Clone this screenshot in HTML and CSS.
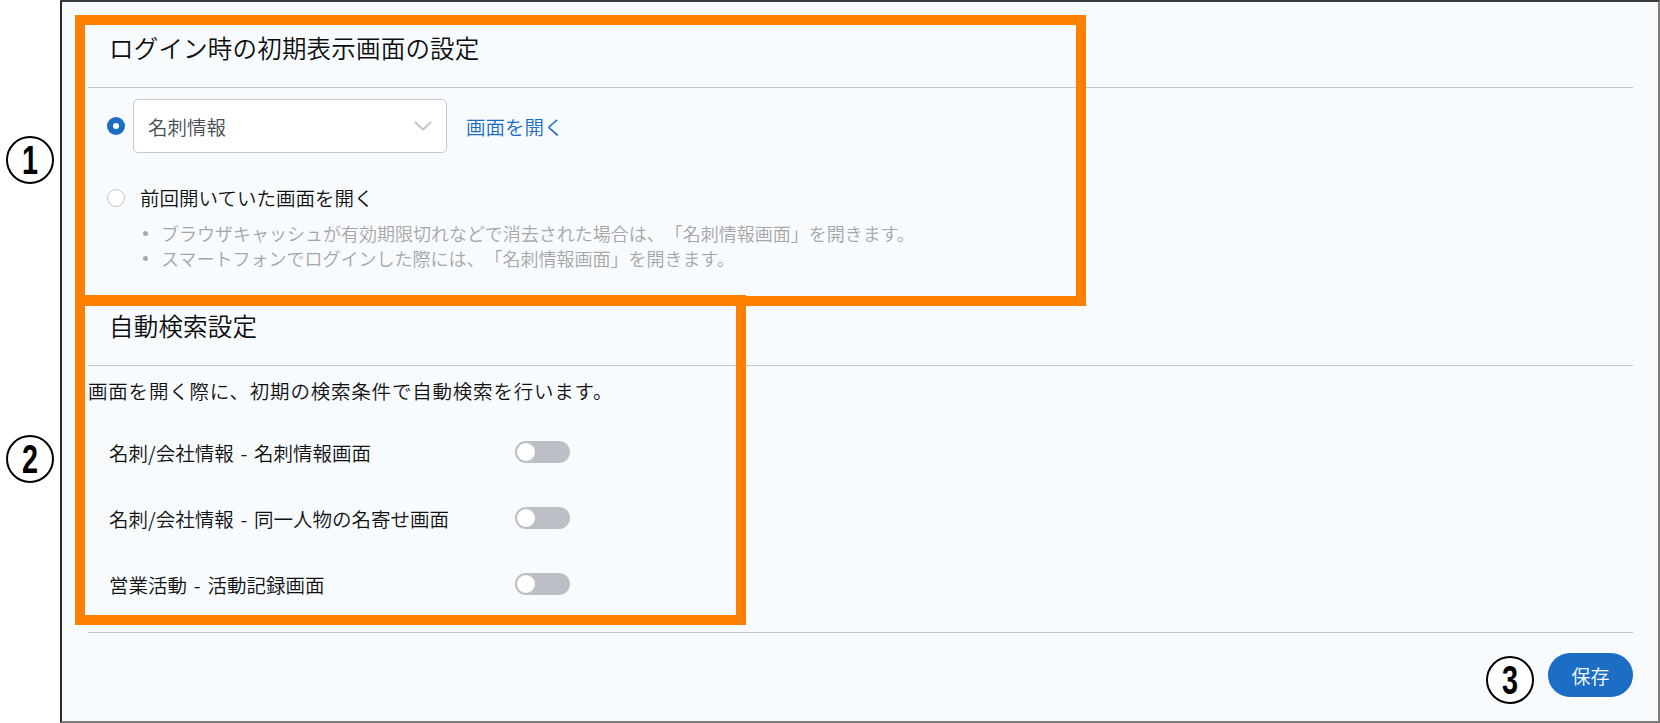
FILE: index.html
```html
<!DOCTYPE html>
<html lang="ja">
<head>
<meta charset="utf-8">
<title>設定</title>
<link rel="stylesheet" href="styles.css">
</head>
<body>
<div class="page">
  <aside class="gutter"></aside>
  <main class="panel">
    <section class="section">
      <h2 class="section-title">ログイン時の初期表示画面の設定</h2>
      <div class="section-body first-body">
        <div class="option-row">
          <span class="radio radio-checked"></span>
          <div class="select">
            <span class="select-value">名刺情報</span>
            <svg class="chevron" width="18" height="10" viewBox="0 0 18 10"><polyline points="1.5,1.5 9,8.5 16.5,1.5" fill="none" stroke="#c3c6cc" stroke-width="2.2" stroke-linecap="round" stroke-linejoin="round"/></svg>
          </div>
          <a class="link">画面を開く</a>
        </div>
        <div class="option-row second-option">
          <span class="radio"></span>
          <span class="option-label">前回開いていた画面を開く</span>
        </div>
        <ul class="notes">
          <li>ブラウザキャッシュが有効期限切れなどで消去された場合は、「名刺情報画面」を開きます。</li>
          <li>スマートフォンでログインした際には、「名刺情報画面」を開きます。</li>
        </ul>
      </div>
    </section>
    <section class="section">
      <h2 class="section-title">自動検索設定</h2>
      <div class="section-body">
        <p class="description">画面を開く際に、初期の検索条件で自動検索を行います。</p>
        <div class="toggle-list">
          <div class="toggle-row"><span class="toggle-label">名刺/会社情報 - 名刺情報画面</span><span class="toggle"><span class="knob"></span></span></div>
          <div class="toggle-row"><span class="toggle-label">名刺/会社情報 - 同一人物の名寄せ画面</span><span class="toggle"><span class="knob"></span></span></div>
          <div class="toggle-row"><span class="toggle-label">営業活動 - 活動記録画面</span><span class="toggle"><span class="knob"></span></span></div>
        </div>
      </div>
    </section>
    <footer class="footer">
      <button class="save">保存</button>
    </footer>
  </main>

  <div class="frame frame-1"></div>
  <div class="frame frame-2"></div>
  <div class="mark mark-1"><span>1</span></div>
  <div class="mark mark-2"><span>2</span></div>
  <div class="mark mark-3"><span>3</span></div>
</div>
</body>
</html>
```
FILE: styles.css
```css
* { box-sizing: border-box; }

html, body {
  margin: 0;
  padding: 0;
  background: #ffffff;
}

body {
  font-family: "Noto Sans CJK JP", "Noto Sans", sans-serif;
  font-weight: 350;
  color: #111111;
  text-spacing-trim: space-all;
}

.page {
  position: relative;
  width: 1660px;
  height: 723px;
  display: flex;
  overflow: hidden;
}

.gutter {
  width: 60px;
  flex: none;
  background: #ffffff;
}

.panel {
  flex: 1;
  height: 723px;
  background: #f8fbfe;
  border-top: 2px solid #3a3a3a;
  border-left: 2px solid #2a2a2a;
  border-right: 2px solid #7c7c7c;
  border-bottom: 2px solid #7c7c7c;
  padding: 0 25px 0 26px;
  display: flex;
  flex-direction: column;
}

.section-title {
  margin: 0;
  height: 86px;
  padding: 5px 0 0 21px;
  display: flex;
  align-items: center;
  font-size: 24.5px;
  font-weight: 350;
  letter-spacing: 0.2px;
  color: #0d0d0d;
  border-bottom: 1px solid #c3c6cc;
}

.first-body {
  padding: 11px 0 9px;
}

.option-row {
  display: flex;
  align-items: center;
  padding-left: 19px;
}

.second-option {
  margin-top: 32px;
  height: 26px;
}

.radio {
  width: 18px;
  height: 18px;
  border-radius: 50%;
  border: 1.5px solid #c2c5ca;
  background: #ffffff;
  flex: none;
}

.radio-checked {
  border: none;
  background: #1c6ec4;
  display: flex;
  align-items: center;
  justify-content: center;
}

.radio-checked::after {
  content: "";
  width: 6px;
  height: 6px;
  border-radius: 50%;
  background: #ffffff;
}

.select {
  margin-left: 8px;
  width: 314px;
  height: 54px;
  border: 1px solid #c5c8ce;
  border-radius: 5px;
  background: #ffffff;
  display: flex;
  align-items: center;
  justify-content: space-between;
  padding: 0 14px 0 14px;
}

.select-value {
  font-size: 19.5px;
  color: #4a4f55;
}

.chevron {
  display: block;
}

.link {
  margin-left: 19px;
  font-size: 19.5px;
  color: #1b6cc2;
  cursor: pointer;
}

.option-label {
  margin-left: 15px;
  font-size: 19.5px;
  line-height: 26px;
  color: #111111;
}

.notes {
  list-style: none;
  margin: 10px 0 0;
  padding: 0 0 0 55px;
}

.notes li {
  display: flex;
  align-items: center;
  font-size: 18px;
  line-height: 25px;
  color: #a6a6a6;
}

.notes li::before {
  content: "";
  width: 5px;
  height: 5px;
  border-radius: 50%;
  background: #a8a8a8;
  margin-right: 13px;
  flex: none;
}

.description {
  margin: 12px 0 0;
  font-size: 19.5px;
  line-height: 26px;
  letter-spacing: 0.8px;
  color: #111111;
}

.toggle-list {
  padding: 15px 0 15px;
}

.toggle-row {
  height: 66px;
  display: flex;
  align-items: center;
  padding-left: 21px;
}

.toggle-label {
  width: 406px;
  font-size: 19.5px;
  word-spacing: 2.5px;
  color: #111111;
  white-space: pre;
}

.toggle {
  width: 55px;
  height: 22px;
  border-radius: 11px;
  background: #bcbfc5;
  display: flex;
  align-items: center;
  padding-left: 2px;
}

.knob {
  width: 18px;
  height: 18px;
  border-radius: 50%;
  background: #ffffff;
}

.footer {
  border-top: 1px solid #c3c6cc;
  padding-top: 20px;
  display: flex;
  justify-content: flex-end;
}

.save {
  width: 85px;
  height: 44px;
  border: none;
  border-radius: 22px;
  background: #1c6ec4;
  color: #ffffff;
  font-family: "Noto Sans CJK JP", sans-serif;
  font-weight: 350;
  font-size: 19px;
  padding: 0;
}

/* annotation overlays */
.frame {
  position: absolute;
  border: 10px solid #ff8000;
  pointer-events: none;
}

.frame-1 {
  left: 75px;
  top: 15px;
  width: 1011px;
  height: 291px;
}

.frame-2 {
  left: 75px;
  top: 295px;
  width: 671px;
  height: 330px;
}

.mark {
  position: absolute;
  width: 48px;
  height: 48px;
  border: 2px solid #000000;
  border-radius: 50%;
  background: #ffffff;
  display: flex;
  align-items: center;
  justify-content: center;
  font-family: "Liberation Sans", sans-serif;
  font-weight: 700;
  font-size: 40px;
  line-height: 1;
  color: #000000;
}

.mark span {
  display: block;
  transform: scaleX(0.72);
}

.mark-1 { left: 6px; top: 136px; }
.mark-2 { left: 6px; top: 435px; }
.mark-3 { left: 1486px; top: 656px; }
```
